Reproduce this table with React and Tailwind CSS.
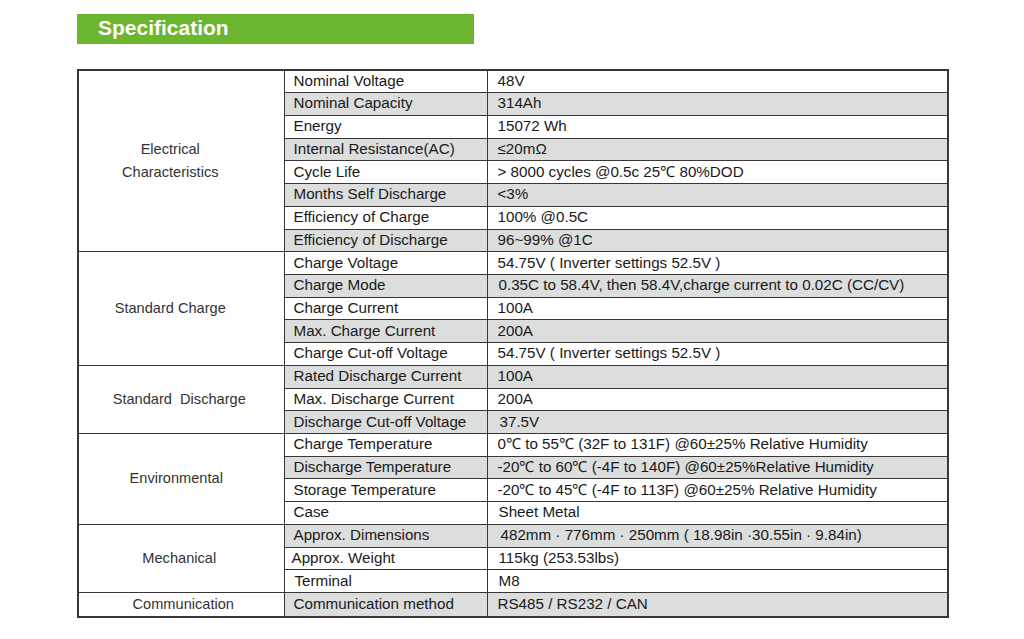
import React from "react";

const groups = [
  {
    name: ["Electrical", "Characteristics"],
    shift: "pr-[22px]",
    rows: [
      ["Nominal Voltage", "48V"],
      ["Nominal Capacity", "314Ah"],
      ["Energy", "15072 Wh"],
      ["Internal Resistance(AC)", "≤20mΩ"],
      ["Cycle Life", "> 8000 cycles @0.5c 25℃ 80%DOD"],
      ["Months Self Discharge", "<3%"],
      ["Efficiency of Charge", "100% @0.5C"],
      ["Efficiency of Discharge", "96~99% @1C"],
    ],
  },
  {
    name: ["Standard Charge"],
    shift: "pr-[22px]",
    rows: [
      ["Charge Voltage", "54.75V ( Inverter settings 52.5V )"],
      ["Charge Mode", "0.35C to 58.4V, then 58.4V,charge current to 0.02C (CC/CV)", "pl-[11px]"],
      ["Charge Current", "100A"],
      ["Max. Charge Current", "200A"],
      ["Charge Cut-off Voltage", "54.75V ( Inverter settings 52.5V )"],
    ],
  },
  {
    name: ["Standard\u00a0\u00a0Discharge"],
    shift: "pr-[4px]",
    rows: [
      ["Rated Discharge Current", "100A"],
      ["Max. Discharge Current", "200A"],
      ["Discharge Cut-off Voltage", "37.5V", "pl-[12px]"],
    ],
  },
  {
    name: ["Environmental"],
    shift: "pr-[10px]",
    rows: [
      ["Charge Temperature", "0℃ to 55℃ (32F to 131F) @60±25% Relative Humidity"],
      ["Discharge Temperature", "-20℃ to 60℃ (-4F to 140F) @60±25%Relative Humidity"],
      ["Storage Temperature", "-20℃ to 45℃ (-4F to 113F) @60±25% Relative Humidity"],
      ["Case", "Sheet Metal", "pl-[11px]"],
    ],
  },
  {
    name: ["Mechanical"],
    shift: "pr-[4px]",
    rows: [
      ["Approx. Dimensions", "482mm · 776mm · 250mm ( 18.98in ·30.55in · 9.84in)", "pl-[13px]"],
      ["Approx. Weight", "115kg (253.53lbs)", "pl-[11px]", "pl-[7px]"],
      ["Terminal", "M8", "pl-[11px]", "pl-[10px]"],
    ],
  },
  {
    name: ["Communication"],
    shift: "pl-[4px]",
    rows: [["Communication method", "RS485 / RS232 / CAN"]],
  },
];

// rows shaded grey, counted over the whole table
const shaded = [1, 3, 5, 7, 9, 11, 13, 15, 17, 20, 23];

export default function App() {
  let index = -1;

  return (
    <div className="w-[1024px] h-[639px] bg-white font-['Liberation_Sans',Arial,sans-serif] text-[#1a1a1a]">
      {/* Header bar */}
      <div className="pt-[14px] pl-[77px]">
        <div className="w-[397px] h-[30px] bg-[#6cb52f] flex items-center pl-[21px] pb-[3px]">
          <h1 className="text-[21px] font-bold text-white leading-none">Specification</h1>
        </div>
      </div>

      {/* Spec table */}
      <div className="pt-[25px] pl-[77px]">
        <table className="w-[872px] border-collapse border-2 border-[#3a3636] text-[15.2px]">
          <colgroup>
            <col className="w-[206px]" />
            <col className="w-[203px]" />
            <col />
          </colgroup>
          <tbody>
            {groups.map((group) =>
              group.rows.map((row, i) => {
                index += 1;
                const grey = shaded.includes(index);
                return (
                  <tr key={row[0]} className="h-[22.72px]">
                    {i === 0 && (
                      <td
                        rowSpan={group.rows.length}
                        className={`border-[1.5px] border-[#3a3636] text-center align-middle leading-[23px] text-[14.6px] text-[#333] ${group.shift}`}
                      >
                        {group.name.map((line) => (
                          <div key={line} className="whitespace-pre">
                            {line}
                          </div>
                        ))}
                      </td>
                    )}
                    <td
                      className={`border-[1.5px] border-[#3a3636] p-0 pb-[2px] ${row[3] || "pl-[9px]"} leading-none whitespace-nowrap ${
                        grey ? "bg-[#dcdddd]" : "bg-white"
                      }`}
                    >
                      {row[0]}
                    </td>
                    <td
                      className={`border-[1.5px] border-[#3a3636] p-0 pb-[2px] ${row[2] || "pl-[10px]"} leading-none whitespace-nowrap ${
                        grey ? "bg-[#dcdddd]" : "bg-white"
                      }`}
                    >
                      {row[1]}
                    </td>
                  </tr>
                );
              }),
            )}
          </tbody>
        </table>
      </div>
    </div>
  );
}
